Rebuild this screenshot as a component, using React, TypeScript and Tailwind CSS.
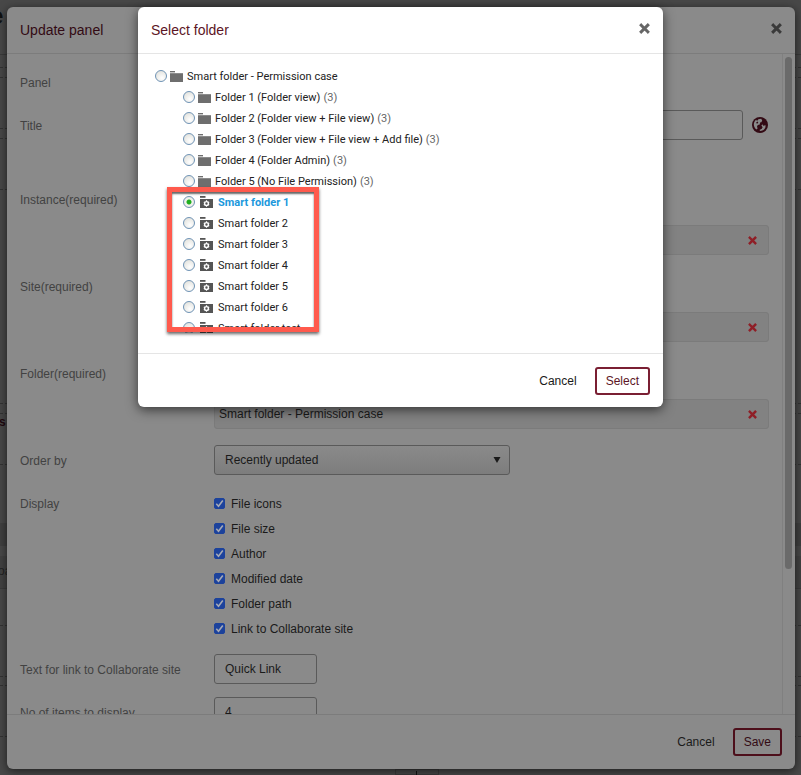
import { useId, useState } from "react";
import type { ReactNode } from "react";

type TreeNode = {
  id: string;
  label: string;
  count?: number;
  smart?: boolean;
};

const ROOT_FOLDER: TreeNode = { id: "root", label: "Smart folder - Permission case" };

const CHILD_FOLDERS: TreeNode[] = [
  { id: "f1", label: "Folder 1 (Folder view)", count: 3 },
  { id: "f2", label: "Folder 2 (Folder view + File view)", count: 3 },
  { id: "f3", label: "Folder 3 (Folder view + File view + Add file)", count: 3 },
  { id: "f4", label: "Folder 4 (Folder Admin)", count: 3 },
  { id: "f5", label: "Folder 5 (No File Permission)", count: 3 },
];

const SMART_FOLDERS: TreeNode[] = [
  { id: "s1", label: "Smart folder 1", smart: true },
  { id: "s2", label: "Smart folder 2", smart: true },
  { id: "s3", label: "Smart folder 3", smart: true },
  { id: "s4", label: "Smart folder 4", smart: true },
  { id: "s5", label: "Smart folder 5", smart: true },
  { id: "s6", label: "Smart folder 6", smart: true },
  { id: "s7", label: "Smart folder test", smart: true },
];

const DISPLAY_OPTIONS = [
  "File icons",
  "File size",
  "Author",
  "Modified date",
  "Folder path",
  "Link to Collaborate site",
];

function CrossIcon({ className }: { className?: string }) {
  return (
    <svg viewBox="0 0 10 10" className={className} aria-hidden="true">
      <path d="M2 2L8 8M8 2L2 8" stroke="currentColor" strokeWidth="2.7" strokeLinecap="square" fill="none" />
    </svg>
  );
}

function GlobeIcon() {
  return (
    <svg viewBox="0 0 16 16" className="size-4" aria-hidden="true">
      <circle cx="8" cy="8" r="8" fill="currentColor" />
      <path
        d="M1.8 7.2C1.9 5.4 2.8 3.6 4.2 2.7L5 4L6.4 2.3L9.2 1.8L10.2 3.4L9.4 5.2L8 5.6L7.8 7.4L5.8 8L5 9.4L5.6 11.4L4.4 12.6C2.8 11.4 1.8 9.4 1.8 7.2Z"
        fill="#8a8a8a"
      />
      <path d="M4.2 5.2L6 4.6L6.2 6L4.8 6.8Z" fill="currentColor" />
      <path d="M9.4 8.6L10.4 7.2L11.2 8.8L13.6 8.2L13.4 10.4C12.6 12.4 10.8 13.8 8.4 14L7.4 13L9.8 11.8L10.6 10.2Z" fill="#8a8a8a" />
    </svg>
  );
}

function FolderIcon() {
  return (
    <svg viewBox="0 0 13 11" className="h-[11px] w-[13px] shrink-0 text-[#6e6e6e]" aria-hidden="true">
      <path d="M0 0H5V1.4H0Z" fill="currentColor" />
      <path d="M0 2.2H13V11H0Z" fill="currentColor" />
    </svg>
  );
}

function SmartFolderIcon() {
  return (
    <svg viewBox="0 0 13 12" className="h-3 w-[13px] shrink-0" aria-hidden="true">
      <path d="M0 0H5.5V1.8H0Z" fill="#555" />
      <path d="M0 3H13V12H0Z" fill="#555" />
      <circle cx="6.5" cy="7.5" r="1.9" fill="none" stroke="#fff" strokeWidth="1.4" />
      <path
        d="M6.5 4.3V5.6M6.5 9.4V10.7M3.8 5.9L4.9 6.6M8.1 8.4L9.2 9.1M3.8 9.1L4.9 8.4M8.1 6.6L9.2 5.9"
        stroke="#fff"
        strokeWidth="1.2"
      />
    </svg>
  );
}

function FormRow({
  label,
  htmlFor,
  className = "",
  children,
}: {
  label: string;
  htmlFor?: string;
  className?: string;
  children?: ReactNode;
}) {
  return (
    <div className={`flex ${className}`}>
      <div className="w-[194px] shrink-0 leading-8 text-[#424242]">
        {htmlFor ? <label htmlFor={htmlFor}>{label}</label> : label}
      </div>
      <div className="min-w-0 flex-1">{children}</div>
    </div>
  );
}

function PickedItem({ name, text }: { name: string; text?: string }) {
  return (
    <div className="mt-[41px] flex h-[30px] items-center justify-between rounded-[3px] border border-[#7b7b7b] bg-[#828282] px-1">
      <span>{text}</span>
      <button type="button" aria-label={`Remove ${name}`} className="mr-[7px] text-[#8f1f27]">
        <CrossIcon className="size-[9px]" />
      </button>
    </div>
  );
}

function TreeItem({
  node,
  selected,
  onSelect,
}: {
  node: TreeNode;
  selected: boolean;
  onSelect: (id: string) => void;
}) {
  const id = useId();
  return (
    <div className="flex h-[21px] items-center">
      <input
        id={id}
        type="radio"
        name="folder"
        checked={selected}
        onChange={() => onSelect(node.id)}
        className="mr-[3px] mb-1 size-3 shrink-0 appearance-none rounded-full border border-[#6f93b5] bg-[radial-gradient(circle_at_60%_70%,#ffffff,#dcdcd6)] checked:bg-[radial-gradient(circle,#1fae1f_0,#1fae1f_2px,#f4f4f0_3px,#e6e6e0_6px)]"
      />
      <label htmlFor={id} className="flex items-center whitespace-nowrap">
        <span className={node.smart ? "mr-[5px] mb-1 ml-[2px]" : "mr-1 mb-[3px]"}>
          {node.smart ? <SmartFolderIcon /> : <FolderIcon />}
        </span>
        <span className={selected ? "font-bold text-[#1c98dc]" : "text-[#222]"}>{node.label}</span>
        {node.count != null && <span className="ml-[3px] text-[#666]">({node.count})</span>}
      </label>
    </div>
  );
}

// Dimmed page that stays visible around the edges of the dialogs
function PageBackdrop() {
  return (
    <div className="absolute inset-0 overflow-hidden" aria-hidden="true">
      <div className="absolute inset-x-0 top-[54px] border-t border-[#3a3a3a]" />
      <div className="absolute inset-x-0 top-[67px] h-[11px] border-y border-dashed border-[#333]" />
      <div className="absolute inset-x-0 top-[128px] h-[11px] border-y border-dashed border-[#333]" />
      <div className="absolute inset-x-0 top-[189px] border-t border-dashed border-[#333]" />
      <div className="absolute inset-x-0 top-[403px] h-[11px] border-y border-dashed border-[#333]" />
      <div className="absolute inset-x-0 top-[464px] border-t border-dashed border-[#333]" />
      <div className="absolute inset-x-0 top-[523px] h-[23px] bg-[#404040]" />
      <div className="absolute inset-x-0 top-[556px] h-[33px] border-b border-[#3a3a3a] bg-[#424242]" />
      <div className="absolute inset-x-0 top-[625px] border-t border-dashed border-[#333]" />
      <div className="absolute inset-x-0 top-[676px] h-[10px] border-y border-dashed border-[#333]" />
      <div className="absolute inset-x-0 top-[736px] border-t border-dashed border-[#333]" />
      <span className="absolute top-0 -left-[10px] text-2xl font-bold text-[#111]">e</span>
      <span className="absolute top-[414px] -left-px text-xs font-bold text-[#200a10]">s</span>
      <span className="absolute top-[563px] -left-[2px] text-xs text-[#222]">oa</span>
      <span className="absolute bottom-0 left-[395px] h-[6px] w-[44px] border border-[#3a3a3a]" />
      <span className="absolute bottom-0 left-[416px] h-[4px] w-px bg-[#111]" />
    </div>
  );
}

function UpdatePanelDialog() {
  const [checked, setChecked] = useState<string[]>(DISPLAY_OPTIONS);
  const [order, setOrder] = useState("recent");

  const toggle = (option: string) => {
    setChecked((prev) => (prev.includes(option) ? prev.filter((o) => o !== option) : [...prev, option]));
  };

  return (
    <section
      aria-label="Update panel"
      className="absolute top-[7px] right-[6px] bottom-[6px] left-[7px] flex flex-col overflow-hidden rounded-md bg-[#8a8a8a] shadow-[0_2px_10px_rgba(0,0,0,0.6)]"
    >
      <header className="flex h-[47px] shrink-0 items-center justify-between border-b border-[#7c7c7c] px-[13px]">
        <h2 className="text-sm text-[#330a14]">Update panel</h2>
        <button type="button" aria-label="Close update panel" className="pb-[3px] text-[#3a3a3a]">
          <CrossIcon className="size-[11px]" />
        </button>
      </header>

      <div className="flex min-h-0 flex-1">
        <form className="flex min-w-0 flex-1 flex-col gap-[13px] overflow-hidden pt-[13px] pr-[13px] pl-[13px]">
          <FormRow label="Panel" className="h-[30px] shrink-0" />
          <FormRow label="Title" htmlFor="title" className="h-[61px] shrink-0">
            <div className="flex items-center gap-[9px]">
              <input
                id="title"
                type="text"
                className="h-[30px] min-w-0 flex-1 rounded-[3px] border border-[#5a5a5a] bg-transparent px-[10px]"
              />
              <button type="button" aria-label="Localize title" className="mr-px text-[#330a14]">
                <GlobeIcon />
              </button>
            </div>
          </FormRow>
          <FormRow label="Instance(required)" className="h-[74px] shrink-0">
            <PickedItem name="instance" />
          </FormRow>
          <FormRow label="Site(required)" className="h-[74px] shrink-0">
            <PickedItem name="site" />
          </FormRow>
          <FormRow label="Folder(required)" className="h-[74px] shrink-0">
            <PickedItem name="folder" text="Smart folder - Permission case" />
          </FormRow>
          <FormRow label="Order by" htmlFor="order" className="h-[30px] shrink-0">
            <div className="relative w-[296px] max-w-full">
              <select
                id="order"
                value={order}
                onChange={(e) => setOrder(e.target.value)}
                className="h-[30px] w-full appearance-none rounded-[3px] border border-[#5a5a5a] bg-linear-to-b from-[#8a8a8a] to-[#7d7d7d] px-[10px]"
              >
                <option value="recent">Recently updated</option>
                <option value="name">Name</option>
              </select>
              <svg viewBox="0 0 8 6" className="pointer-events-none absolute top-3 right-[9px] h-[6px] w-2" aria-hidden="true">
                <path d="M0.5 0H7.5L4 6Z" fill="#1a1a1a" />
              </svg>
            </div>
          </FormRow>
          <FormRow label="Display" className="shrink-0">
            <div className="pt-[3px]">
              {DISPLAY_OPTIONS.map((option) => (
                <label key={option} className="flex h-[25px] items-center gap-[6px]">
                  <input
                    type="checkbox"
                    checked={checked.includes(option)}
                    onChange={() => toggle(option)}
                    className="peer sr-only"
                  />
                  <span className="flex size-[11px] items-center justify-center rounded-[2px] border border-[#444] peer-checked:border-[#1c429c] peer-checked:bg-[#1c429c]">
                    <svg viewBox="0 0 11 11" className="size-[11px] shrink-0" aria-hidden="true">
                      <path d="M2.3 5.8L4.5 8.2L8.8 2.6" fill="none" stroke="#a5a9b5" strokeWidth="1.6" />
                    </svg>
                  </span>
                  {option}
                </label>
              ))}
            </div>
          </FormRow>
          <FormRow label="Text for link to Collaborate site" htmlFor="link-text" className="h-[30px] shrink-0">
            <input
              id="link-text"
              type="text"
              defaultValue="Quick Link"
              className="h-[30px] w-[103px] rounded-[3px] border border-[#5a5a5a] bg-transparent px-[10px]"
            />
          </FormRow>
          <FormRow label="No of items to display" htmlFor="item-count" className="h-[30px] shrink-0">
            <input
              id="item-count"
              type="text"
              defaultValue="4"
              className="h-[30px] w-[103px] rounded-[3px] border border-[#5a5a5a] bg-transparent px-[10px]"
            />
          </FormRow>
        </form>
        <div className="w-[13px] shrink-0 border-l border-[#808080] px-[2px] pt-[3px]">
          <div className="h-[78%] w-[7px] rounded-full bg-[#6a6a6a]" />
        </div>
      </div>

      <footer className="flex h-[55px] shrink-0 items-center justify-end gap-[18px] border-t border-[#7c7c7c] px-[13px]">
        <button type="button">Cancel</button>
        <button type="button" className="h-7 rounded-[3px] border-2 border-[#4d0f1b] px-[9px] text-[#330a14]">
          Save
        </button>
      </footer>
    </section>
  );
}

function SelectFolderDialog() {
  const [selected, setSelected] = useState("s1");

  return (
    <section
      aria-label="Select folder"
      className="relative w-full max-w-[525px] rounded-md bg-white shadow-[0_3px_12px_rgba(0,0,0,0.6)]"
    >
      <header className="flex h-[47px] items-center justify-between border-b border-[#e5e5e5] px-[13px]">
        <h2 className="text-sm text-[#5c1525]">Select folder</h2>
        <button type="button" aria-label="Close select folder" className="pb-[3px] text-[#666]">
          <CrossIcon className="size-[11px]" />
        </button>
      </header>

      <div className="relative mt-[13px] mb-5 ml-[17px] font-[Roboto,sans-serif] text-[11px]">
        <div className="h-[266px] overflow-hidden">
          <TreeItem node={ROOT_FOLDER} selected={selected === ROOT_FOLDER.id} onSelect={setSelected} />
          <div className="pl-7">
            {[...CHILD_FOLDERS, ...SMART_FOLDERS].map((node) => (
              <TreeItem key={node.id} node={node} selected={selected === node.id} onSelect={setSelected} />
            ))}
          </div>
        </div>
        {/* Callout around the smart folders */}
        <div className="pointer-events-none absolute top-[120px] left-3 h-[145px] w-[152px] border-[5px] border-[#ff5a4d] shadow-[0_2px_3px_rgba(0,0,0,0.6),inset_0_2px_2px_rgba(0,0,0,0.6)]" />
      </div>

      <footer className="flex h-[54px] items-center justify-end gap-[18px] border-t border-[#e5e5e5] px-[13px]">
        <button type="button">Cancel</button>
        <button type="button" className="h-7 rounded-[3px] border-2 border-[#7a1f33] px-[9px] text-[#5c1525]">
          Select
        </button>
      </footer>
    </section>
  );
}

export default function App() {
  return (
    <div className="relative min-h-screen overflow-hidden bg-[#484848] font-['Liberation_Sans',Arial,sans-serif] text-xs text-[#1a1a1a]">
      <PageBackdrop />
      <UpdatePanelDialog />
      <div className="relative flex justify-center pt-[7px]">
        <SelectFolderDialog />
      </div>
    </div>
  );
}
